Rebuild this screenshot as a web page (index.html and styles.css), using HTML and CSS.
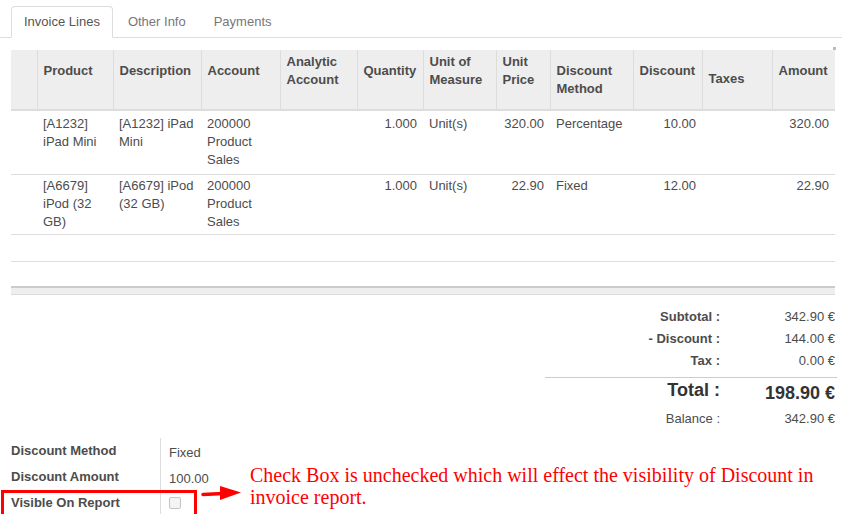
FILE: index.html
```html
<!DOCTYPE html>
<html>
<head>
<meta charset="utf-8">
<link rel="stylesheet" href="styles.css">
</head>
<body>
<div class="page">
  <ul class="tabs">
    <li class="tab active"><a>Invoice Lines</a></li>
    <li class="tab"><a>Other Info</a></li>
    <li class="tab"><a>Payments</a></li>
  </ul>

  <div class="lines-wrap">
    <table class="lines">
      <colgroup>
        <col style="width:26px"><col style="width:76px"><col style="width:88px"><col style="width:79px">
        <col style="width:77px"><col style="width:66px"><col style="width:73px"><col style="width:54px">
        <col style="width:83px"><col style="width:69px"><col style="width:70px"><col style="width:63px">
      </colgroup>
      <thead>
        <tr>
          <th></th>
          <th>Product</th>
          <th>Description</th>
          <th>Account</th>
          <th class="hi">Analytic Account</th>
          <th>Quantity</th>
          <th class="hi">Unit of Measure</th>
          <th class="hi">Unit Price</th>
          <th class="lo">Discount Method</th>
          <th>Discount</th>
          <th class="mid">Taxes</th>
          <th>Amount</th>
        </tr>
      </thead>
      <tbody>
        <tr class="r1">
          <td></td>
          <td>[A1232] iPad Mini</td>
          <td>[A1232] iPad Mini</td>
          <td>200000 Product Sales</td>
          <td></td>
          <td class="num">1.000</td>
          <td>Unit(s)</td>
          <td class="num">320.00</td>
          <td>Percentage</td>
          <td class="num">10.00</td>
          <td></td>
          <td class="num">320.00</td>
        </tr>
        <tr class="r2">
          <td></td>
          <td>[A6679] iPod (32 GB)</td>
          <td>[A6679] iPod (32 GB)</td>
          <td>200000 Product Sales</td>
          <td></td>
          <td class="num">1.000</td>
          <td>Unit(s)</td>
          <td class="num">22.90</td>
          <td>Fixed</td>
          <td class="num">12.00</td>
          <td></td>
          <td class="num">22.90</td>
        </tr>
        <tr class="empty e1"><td colspan="12"></td></tr>
        <tr class="empty e2"><td colspan="12"></td></tr>
      </tbody>
      <tfoot>
        <tr><td colspan="12"></td></tr>
      </tfoot>
    </table>
    <span class="scroll-dot"></span>
  </div>

  <table class="totals">
    <tr><th>Subtotal :</th><td>342.90 €</td></tr>
    <tr><th>- Discount :</th><td>144.00 €</td></tr>
    <tr class="tax"><th>Tax :</th><td>0.00 €</td></tr>
    <tr class="grand"><th>Total :</th><td>198.90 €</td></tr>
    <tr class="balance"><th>Balance :</th><td>342.90 €</td></tr>
  </table>

  <div class="bottom">
    <div class="form">
      <div class="label">Discount Method</div><div class="value">Fixed</div>
      <div class="label">Discount Amount</div><div class="value">100.00</div>
      <div class="label">Visible On Report</div><div class="value"><span class="checkbox"></span></div>
      <div class="highlight"></div>
      <svg class="arrow" width="44" height="20" viewBox="0 0 44 20">
        <path d="M2 11.5 L22 10.5" stroke="#ff0000" stroke-width="3.5" stroke-linecap="round" fill="none"/>
        <path d="M19 3 L40 9.5 L19 17 Z" fill="#ff0000"/>
      </svg>
    </div>
    <p class="note">Check Box is unchecked which will effect the visibility of Discount in invoice report.</p>
  </div>
</div>
</body>
</html>
```

FILE: styles.css
```css
html, body {
  margin: 0;
  padding: 0;
  background: #fff;
}
body {
  font-family: "Liberation Sans", Arial, sans-serif;
  font-size: 13px;
  line-height: 18px;
  color: #4c4c4c;
  overflow: hidden;
  width: 842px;
  height: 514px;
}
.page {
  position: relative;
}

/* Tabs */
.tabs {
  list-style: none;
  margin: 0;
  padding: 6px 0 0 11px;
  display: flex;
  border-bottom: 1px solid #ddd;
}
.tab {
  margin: 0 2px -1px 0;
}
.tab a {
  display: block;
  padding: 6px 12px 6px;
  border: 1px solid transparent;
  border-radius: 4px 4px 0 0;
  color: #777;
}
.tab.active a {
  color: #555;
  background: #fff;
  border-color: #ddd;
  border-bottom-color: #fff;
}

/* Lines table */
.lines-wrap {
  position: relative;
  margin: 12px 7px 0 11px;
}
.lines {
  width: 824px;
  table-layout: fixed;
  border-collapse: collapse;
}
.lines th {
  background: #eee;
  font-weight: bold;
  text-align: left;
  vertical-align: top;
  padding: 12px 6px 0 6px;
  height: 60px;
  box-sizing: border-box;
  border-left: 1px solid #ddd;
  border-bottom: 2px solid #ddd;
  color: #4c4c4c;
}
.lines th:first-child { border-left: none; }
.lines th.hi { padding-top: 3px; }
.lines th.mid { padding-top: 20px; }
.lines td {
  padding: 4px 6px 3px 6px;
  vertical-align: top;
  border-top: 1px solid #ddd;
}
.lines td.num { text-align: right; }
.lines tr.r1 td { border-top: none; height: 54px; padding-top: 4px; padding-bottom: 5px; }
.lines tr.r2 td { height: 54px; padding-top: 2px; padding-bottom: 3px; }
.lines tr.empty td { height: 18px; padding: 4px 0 3px; }
.lines tr.e1 td { padding-bottom: 4px; }
.lines tr.e2 td { padding-bottom: 2px; }
.lines tfoot td {
  height: 6px;
  padding: 0;
  background: #eee;
  border-top: 2px solid #ccc;
  border-bottom: 1px solid #ddd;
}
.scroll-dot {
  position: absolute;
  right: -1px;
  top: -3px;
  width: 3px;
  height: 3px;
  background: #bbb;
}

/* Totals */
.totals {
  border-collapse: collapse;
  margin: 11px 5px 0 auto;
  width: 292px;
}
.totals th, .totals td {
  text-align: right;
  padding: 2px 0;
  vertical-align: top;
  white-space: nowrap;
}
.totals th {
  font-weight: bold;
  width: 175px;
}
.totals td {
  padding-right: 2px;
}
.totals tr.tax th, .totals tr.tax td { padding-bottom: 7px; }
.totals tr.grand th, .totals tr.grand td {
  border-top: 1px solid #ccc;
  font-size: 18px;
  line-height: 20px;
  font-weight: bold;
  color: #333;
}
.totals tr.grand th { padding-top: 2px; padding-bottom: 8px; }
.totals tr.grand td { padding-top: 5px; padding-bottom: 5px; }
.totals tr.balance th { font-weight: normal; }

/* Bottom form */
.bottom {
  display: flex;
  align-items: flex-start;
  margin-top: 8px;
}
.form {
  position: relative;
  display: grid;
  grid-template-columns: 150px 89px;
  grid-auto-rows: 26px;
  margin-left: 11px;
  width: 239px;
}
.label {
  font-weight: bold;
  color: #4c4c4c;
  padding-top: 4px;
  border-right: 1px solid #ddd;
}
.value {
  padding: 6px 0 0 8px;
}
.checkbox {
  display: block;
  margin-top: 1px;
  width: 10px;
  height: 10px;
  border: 1px solid #c4c4c4;
  border-radius: 2px;
  background: #f4f4f4;
}
.highlight {
  position: absolute;
  left: -10px;
  top: 52px;
  width: 190px;
  height: 30px;
  border: 3px solid #ff0000;
}
.arrow {
  position: absolute;
  left: 190px;
  top: 45px;
}
.note {
  margin: 26px 0 0 0;
  font-family: "Liberation Serif", "Times New Roman", serif;
  font-size: 20px;
  line-height: 22px;
  color: #ff0000;
  width: 580px;
}
```
